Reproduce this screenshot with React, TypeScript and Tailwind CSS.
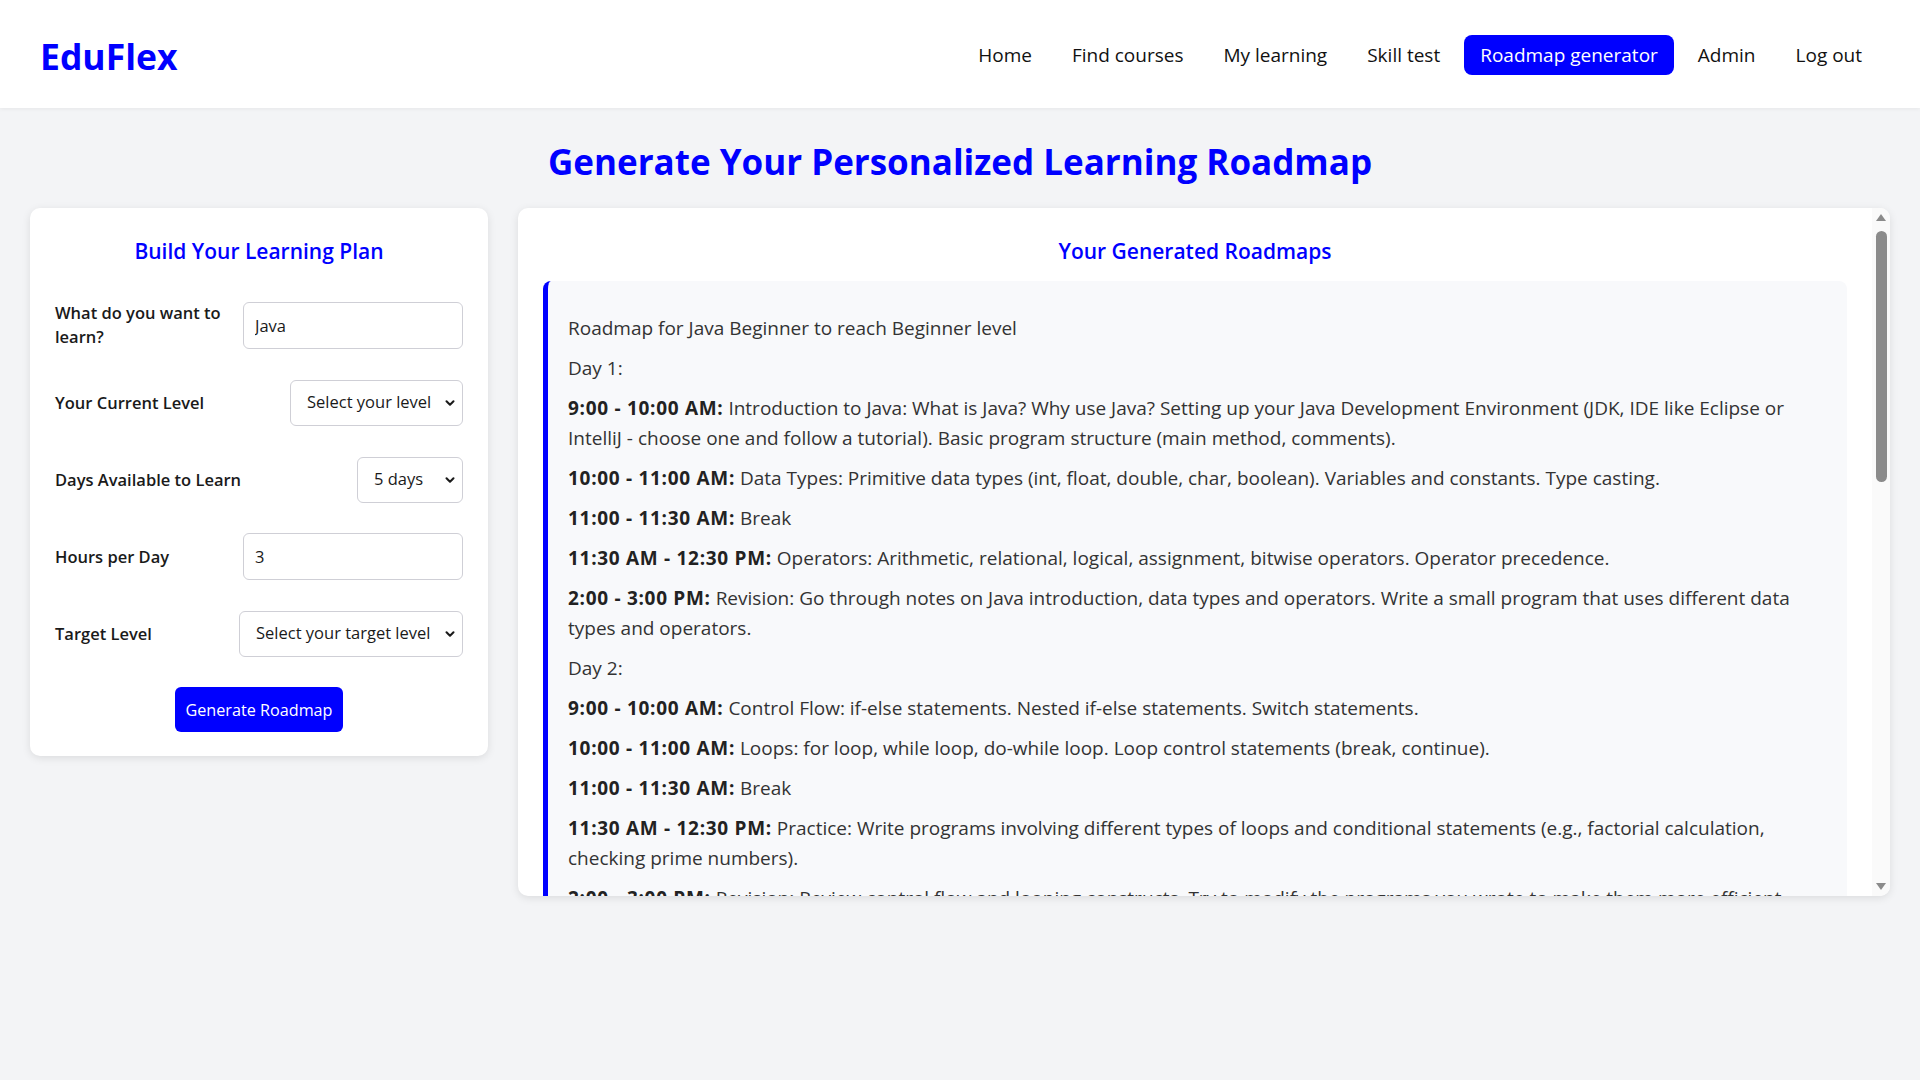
import { ChevronDown } from "lucide-react";

type Slot = { time: string; text: string };
type Day = { title: string; slots: Slot[] };

const navItems = ["Home", "Find courses", "My learning", "Skill test", "Roadmap generator", "Admin", "Log out"];

const roadmap: Day[] = [
  {
    title: "Day 1:",
    slots: [
      {
        time: "9:00 - 10:00 AM:",
        text: "Introduction to Java: What is Java? Why use Java? Setting up your Java Development Environment (JDK, IDE like Eclipse or IntelliJ - choose one and follow a tutorial). Basic program structure (main method, comments).",
      },
      {
        time: "10:00 - 11:00 AM:",
        text: "Data Types: Primitive data types (int, float, double, char, boolean). Variables and constants. Type casting.",
      },
      { time: "11:00 - 11:30 AM:", text: "Break" },
      {
        time: "11:30 AM - 12:30 PM:",
        text: "Operators: Arithmetic, relational, logical, assignment, bitwise operators. Operator precedence.",
      },
      {
        time: "2:00 - 3:00 PM:",
        text: "Revision: Go through notes on Java introduction, data types and operators. Write a small program that uses different data types and operators.",
      },
    ],
  },
  {
    title: "Day 2:",
    slots: [
      {
        time: "9:00 - 10:00 AM:",
        text: "Control Flow: if-else statements. Nested if-else statements. Switch statements.",
      },
      {
        time: "10:00 - 11:00 AM:",
        text: "Loops: for loop, while loop, do-while loop. Loop control statements (break, continue).",
      },
      { time: "11:00 - 11:30 AM:", text: "Break" },
      {
        time: "11:30 AM - 12:30 PM:",
        text: "Practice: Write programs involving different types of loops and conditional statements (e.g., factorial calculation, checking prime numbers).",
      },
      {
        time: "2:00 - 3:00 PM:",
        text: "Revision: Review control flow and looping constructs. Try to modify the programs you wrote to make them more efficient.",
      },
    ],
  },
  {
    title: "Day 3:",
    slots: [
      {
        time: "9:00 - 10:00 AM:",
        text: "Arrays: Declaring, initializing and accessing one-dimensional arrays. Iterating over arrays with loops.",
      },
      {
        time: "10:00 - 11:00 AM:",
        text: "Multi-dimensional arrays. Common array operations (searching, sorting, finding min and max).",
      },
      { time: "11:00 - 11:30 AM:", text: "Break" },
      {
        time: "11:30 AM - 12:30 PM:",
        text: "Strings: String class, common String methods (length, charAt, substring, indexOf, equals). StringBuilder basics.",
      },
      {
        time: "2:00 - 3:00 PM:",
        text: "Revision: Write programs that reverse a string, count vowels and sort an array of numbers.",
      },
    ],
  },
  {
    title: "Day 4:",
    slots: [
      {
        time: "9:00 - 10:00 AM:",
        text: "Methods: Defining and calling methods. Parameters, return types and method overloading.",
      },
      {
        time: "10:00 - 11:00 AM:",
        text: "Introduction to OOP: Classes and objects. Fields, constructors and the this keyword.",
      },
      { time: "11:00 - 11:30 AM:", text: "Break" },
      {
        time: "11:30 AM - 12:30 PM:",
        text: "Encapsulation: Access modifiers (public, private, protected). Getters and setters.",
      },
      {
        time: "2:00 - 3:00 PM:",
        text: "Revision: Create a simple class (e.g., Student or BankAccount) with fields, constructors and methods.",
      },
    ],
  },
  {
    title: "Day 5:",
    slots: [
      {
        time: "9:00 - 10:00 AM:",
        text: "Inheritance and Polymorphism: extends keyword, method overriding, the super keyword.",
      },
      {
        time: "10:00 - 11:00 AM:",
        text: "Exception Handling: try, catch, finally blocks. Common exceptions and throwing exceptions.",
      },
      { time: "11:00 - 11:30 AM:", text: "Break" },
      {
        time: "11:30 AM - 12:30 PM:",
        text: "Mini project: Build a small console application (e.g., a simple calculator or to-do list) using everything learned so far.",
      },
      {
        time: "2:00 - 3:00 PM:",
        text: "Final revision: Review all topics from Day 1 to Day 5 and note down areas that need more practice.",
      },
    ],
  },
];

function FieldRow({ label, children }: { label: string; children: React.ReactNode }) {
  return (
    <div className="mb-[30px] flex min-h-[47px] items-center justify-between gap-3">
      <label className="min-w-0 flex-1 text-[16.5px] font-semibold leading-[24px] text-[#1a1a1a]">{label}</label>
      {children}
    </div>
  );
}

function Select({ value, width }: { value: string; width: string }) {
  return (
    <div className={`relative shrink-0 ${width}`}>
      <select
        defaultValue={value}
        className="h-[46px] w-full appearance-none rounded-md border border-[#cfcfd6] bg-white pl-4 pr-7 text-[16.5px] text-[#1a1a1a]"
      >
        <option>{value}</option>
      </select>
      <ChevronDown
        size={14}
        strokeWidth={3.5}
        className="pointer-events-none absolute right-[6px] top-1/2 -translate-y-1/2 text-[#1a1a1a]"
      />
    </div>
  );
}

// headless screenshots hide native scrollbars, so the bar is drawn beside the scroll area
function ScrollRail() {
  return (
    <div className="flex w-[18px] shrink-0 flex-col items-center bg-[#fafafa] py-[5px]">
      <svg width="12" height="9" viewBox="0 0 12 9" className="text-[#8b8b8b]">
        <path d="M6 1 L11 8 H1 Z" fill="currentColor" />
      </svg>
      <div className="mt-[9px] h-[251px] w-[11px] rounded-full bg-[#8b8b8b]" />
      <div className="flex-1" />
      <svg width="12" height="9" viewBox="0 0 12 9" className="text-[#8b8b8b]">
        <path d="M1 1 H11 L6 8 Z" fill="currentColor" />
      </svg>
    </div>
  );
}

export default function App() {
  return (
    <div className="min-h-screen bg-[#f3f4f6] font-['Open_Sans',sans-serif] text-[#333]">
      <header className="flex h-[108px] items-center justify-between bg-white pl-[40px] pr-[42px] shadow-[0_1px_4px_rgba(0,0,0,0.06)]">
        <div className="pt-[5px] text-[35.5px] font-bold leading-none text-[#0000ff]">EduFlex</div>
        <nav className="flex items-center gap-2 pt-[1px]">
          {navItems.map((item) => (
            <a
              key={item}
              href="#"
              className={
                item === "Roadmap generator"
                  ? "rounded-lg bg-[#0000ff] px-4 py-2 text-[19px] leading-6 text-white"
                  : "rounded-lg px-4 py-2 text-[19px] leading-6 text-[#111]"
              }
            >
              {item}
            </a>
          ))}
        </nav>
      </header>

      <main className="px-[30px] pb-10">
        <h1 className="mb-[25px] mt-[33px] text-center text-[35px] font-bold leading-[1.2] text-[#0000ff]">
          Generate Your Personalized Learning Roadmap
        </h1>

        <div className="flex items-start gap-[30px]">
          <section className="w-[458px] shrink-0 rounded-[10px] bg-white px-[25px] pb-[24px] pt-[30px] shadow-[0_2px_8px_rgba(0,0,0,0.1)]">
            <h2 className="mb-[37px] text-center text-[21px] font-semibold leading-[1.25] text-[#0000ff]">
              Build Your Learning Plan
            </h2>

            <FieldRow label="What do you want to learn?">
              <input
                defaultValue="Java"
                className="h-[47px] w-[220px] shrink-0 rounded-md border border-[#cfcfd6] bg-white px-[11px] text-[16.5px] text-[#1a1a1a]"
              />
            </FieldRow>
            <FieldRow label="Your Current Level">
              <Select value="Select your level" width="w-[173px]" />
            </FieldRow>
            <FieldRow label="Days Available to Learn">
              <Select value="5 days" width="w-[106px]" />
            </FieldRow>
            <FieldRow label="Hours per Day">
              <input
                defaultValue="3"
                className="h-[47px] w-[220px] shrink-0 rounded-md border border-[#cfcfd6] bg-white px-[11px] text-[16.5px] text-[#1a1a1a]"
              />
            </FieldRow>
            <FieldRow label="Target Level">
              <Select value="Select your target level" width="w-[224px]" />
            </FieldRow>

            <button className="mx-auto block h-[45px] w-[168px] rounded-md bg-[#0000ff] text-[16.2px] text-white">
              Generate Roadmap
            </button>
          </section>

          <section className="flex h-[688px] min-w-0 flex-1 overflow-hidden rounded-[10px] bg-white shadow-[0_2px_8px_rgba(0,0,0,0.1)]">
            <div className="min-w-0 flex-1 overflow-y-auto pb-[25px] pl-[25px] pr-[25px] pt-[30px]">
              <h2 className="mb-[17px] text-center text-[21px] font-semibold leading-[1.25] text-[#0000ff]">
                Your Generated Roadmaps
              </h2>

              <div className="rounded-lg border-l-[5px] border-[#0000ff] bg-[#f8f9fb] px-5 pb-5 pt-[22px]">
                <p className="my-[10px] text-[19px] leading-[30px]">Roadmap for Java Beginner to reach Beginner level</p>
                {roadmap.map((day) => (
                  <div key={day.title}>
                    <p className="my-[10px] text-[19px] leading-[30px]">{day.title}</p>
                    {day.slots.map((slot, i) => (
                      <p key={i} className="my-[10px] text-[19px] leading-[30px]">
                        <strong className="font-bold tracking-[0.7px] text-[#222]">{slot.time}</strong> {slot.text}
                      </p>
                    ))}
                  </div>
                ))}
              </div>
            </div>
            <ScrollRail />
          </section>
        </div>
      </main>
    </div>
  );
}
